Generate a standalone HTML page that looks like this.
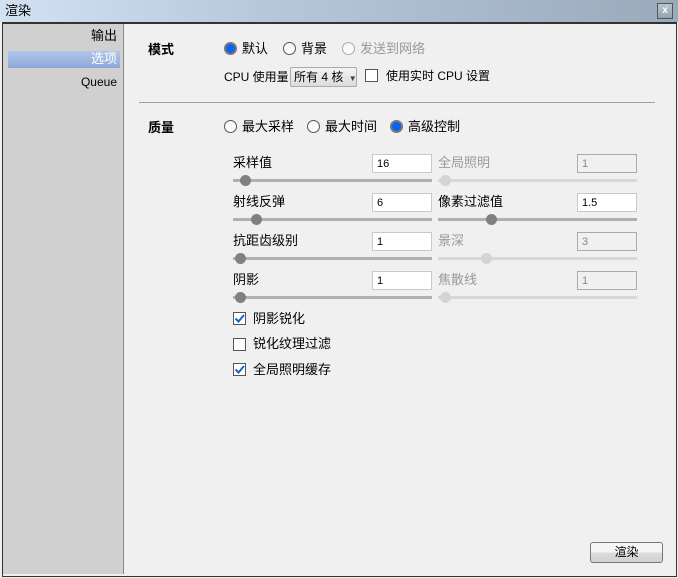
<!DOCTYPE html>
<html><head><meta charset="utf-8"><style>
*{margin:0;padding:0;box-sizing:border-box}
body{width:678px;height:578px;overflow:hidden;background:#f0f0f0;font-family:"Liberation Sans","Noto Sans CJK SC",sans-serif;font-size:12px;line-height:14px;color:#000;position:relative}
.a{position:absolute;white-space:nowrap}
.title{left:0;top:0;width:678px;height:22px;background:linear-gradient(90deg,#d2e2f3 0%,#b5c7da 40%,#9aaabb 100%)}
.rad{width:13px;height:13px;border-radius:50%;border:1px solid #555;background:linear-gradient(#f4f4f4,#fff)}
.rad.on{background:#0a64f0;border:2px solid #777}
.rad.dis{border-color:#aaa}
.cb{width:13px;height:13px;border:1px solid #555;background:#fff}
.inp{width:60px;height:19px;border:1px solid #c9c9c9;background:#fff;padding:2px 4px;font-size:11px;line-height:14px}
.inp.dis{background:#f0f0f0;border-color:#aaa;color:#888}
.trk{height:3px;background:#b0b0b0}
.trk.dis{background:#d8d8d8}
.knob{width:11px;height:11px;border-radius:50%;background:#808080}
.knob.dis{background:#d4d4d4}
.g{color:#999}
</style></head><body>
<div class="a title"></div>
<div class="a" style="left:5px;top:4px;font-size:13px">渲染</div>
<div class="a" style="left:657px;top:3px;width:16px;height:16px;border:1px solid #555;background:linear-gradient(#b8c4d0,#94a2b0);color:#fff;font-size:10px;font-weight:bold;text-align:center;line-height:13px">x</div>
<div class="a" style="left:2px;top:22px;width:675px;height:555px;border:1px solid #333;border-top:2px solid #333"></div>
<div class="a" style="left:3px;top:24px;width:121px;height:550px;background:#d0d0d0;border-right:1px solid #888"></div>
<div class="a" style="left:8px;top:51px;width:112px;height:17px;background:linear-gradient(#b0c6ea,#8ea8d8)"></div>
<div class="a" style="right:561px;top:29px;font-size:13px">输出</div>
<div class="a" style="right:561px;top:52px;font-size:13px;color:#fff">选项</div>
<div class="a" style="right:561px;top:75px;font-size:12px">Queue</div>

<div class="a" style="left:148px;top:43px;font-size:13px;font-weight:bold">模式</div>
<div class="a rad on" style="left:224px;top:42px"></div><div class="a" style="left:242px;top:42px;font-size:13px">默认</div>
<div class="a rad" style="left:283px;top:42px"></div><div class="a" style="left:301px;top:42px;font-size:13px">背景</div>
<div class="a rad dis" style="left:342px;top:42px"></div><div class="a g" style="left:360px;top:42px;font-size:13px">发送到网络</div>
<div class="a" style="left:224px;top:70px">CPU 使用量</div>
<div class="a" style="left:290px;top:67px;width:67px;height:20px;border:1px solid #aaa;border-radius:2px;background:linear-gradient(#f4f4f4,#dcdcdc);padding:2px 3px;font-size:12px">所有 4 核 <span style="font-size:8px;color:#444;margin-left:2px">▼</span></div>
<div class="a cb" style="left:365px;top:69px"></div>
<div class="a" style="left:386px;top:69px">使用实时 CPU 设置</div>

<div class="a" style="left:139px;top:102px;width:516px;height:1px;background:#a0a0a0"></div>

<div class="a" style="left:148px;top:121px;font-size:13px;font-weight:bold">质量</div>
<div class="a rad" style="left:224px;top:120px"></div><div class="a" style="left:242px;top:120px;font-size:13px">最大采样</div>
<div class="a rad" style="left:307px;top:120px"></div><div class="a" style="left:325px;top:120px;font-size:13px">最大时间</div>
<div class="a rad on" style="left:390px;top:120px"></div><div class="a" style="left:408px;top:120px;font-size:13px">高级控制</div>

<div class="a" style="left:233px;top:156px;font-size:13px">采样值</div>
<div class="a inp" style="left:372px;top:154px">16</div>
<div class="a g" style="left:438px;top:156px;font-size:13px">全局照明</div>
<div class="a inp dis" style="left:577px;top:154px">1</div>
<div class="a trk" style="left:233px;top:179px;width:199px"></div><div class="a knob" style="left:240px;top:175px"></div>
<div class="a trk dis" style="left:438px;top:179px;width:199px"></div><div class="a knob dis" style="left:440px;top:175px"></div>

<div class="a" style="left:233px;top:195px;font-size:13px">射线反弹</div>
<div class="a inp" style="left:372px;top:193px">6</div>
<div class="a" style="left:438px;top:195px;font-size:13px">像素过滤值</div>
<div class="a inp" style="left:577px;top:193px">1.5</div>
<div class="a trk" style="left:233px;top:218px;width:199px"></div><div class="a knob" style="left:251px;top:214px"></div>
<div class="a trk" style="left:438px;top:218px;width:199px"></div><div class="a knob" style="left:486px;top:214px"></div>

<div class="a" style="left:233px;top:234px;font-size:13px">抗距齿级别</div>
<div class="a inp" style="left:372px;top:232px">1</div>
<div class="a g" style="left:438px;top:234px;font-size:13px">景深</div>
<div class="a inp dis" style="left:577px;top:232px">3</div>
<div class="a trk" style="left:233px;top:257px;width:199px"></div><div class="a knob" style="left:235px;top:253px"></div>
<div class="a trk dis" style="left:438px;top:257px;width:199px"></div><div class="a knob dis" style="left:481px;top:253px"></div>

<div class="a" style="left:233px;top:273px;font-size:13px">阴影</div>
<div class="a inp" style="left:372px;top:271px">1</div>
<div class="a g" style="left:438px;top:273px;font-size:13px">焦散线</div>
<div class="a inp dis" style="left:577px;top:271px">1</div>
<div class="a trk" style="left:233px;top:296px;width:199px"></div><div class="a knob" style="left:235px;top:292px"></div>
<div class="a trk dis" style="left:438px;top:296px;width:199px"></div><div class="a knob dis" style="left:440px;top:292px"></div>

<div class="a cb" style="left:233px;top:312px"><svg width="11" height="11" style="position:absolute;left:0;top:0"><path d="M1.5 5.5 L4.5 8.5 L10 2" stroke="#1a5fd0" stroke-width="2" fill="none"/></svg></div>
<div class="a" style="left:253px;top:312px;font-size:13px">阴影锐化</div>
<div class="a cb" style="left:233px;top:338px"></div>
<div class="a" style="left:253px;top:337px;font-size:13px">锐化纹理过滤</div>
<div class="a cb" style="left:233px;top:363px"><svg width="11" height="11" style="position:absolute;left:0;top:0"><path d="M1.5 5.5 L4.5 8.5 L10 2" stroke="#1a5fd0" stroke-width="2" fill="none"/></svg></div>
<div class="a" style="left:253px;top:363px;font-size:13px">全局照明缓存</div>

<div class="a" style="left:590px;top:542px;width:73px;height:21px;border:1px solid #777;border-radius:3px;background:linear-gradient(#f6f6f6 45%,#dcdcdc 55%,#d0d0d0);text-align:center;line-height:19px;font-size:12px">渲染</div>
</body></html>
